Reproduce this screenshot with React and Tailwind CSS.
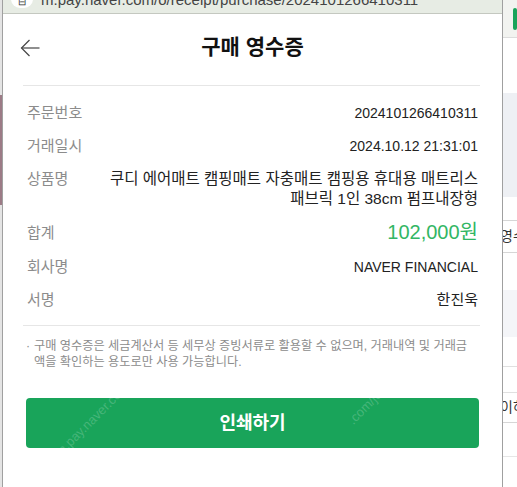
import React from "react";

const rows = [
  { label: "주문번호", value: "2024101266410311" },
  { label: "거래일시", value: "2024.10.12 21:31:01" },
];

const Row = ({ label, children, center, valueClass = "text-[14px]" }) => (
  <div className={`flex justify-between ${center ? "items-center" : "items-start"}`}>
    <span className="w-[80px] shrink-0 text-[15px] leading-[20px] text-[#8c8c8c]">{label}</span>
    <div className={`text-right leading-[20px] text-[#222] ${valueClass}`}>{children}</div>
  </div>
);

const BackPage = () => (
  <div className="flex-1 flex flex-col overflow-hidden bg-white text-[14px] text-[#333] whitespace-nowrap">
    <div className="h-[38px] bg-[#f2f3f0] border-b border-[#dcdcdc] flex items-center">
      <div className="ml-[10px] w-[8px] h-[22px] rounded-[2px] bg-[#1aa35a]"></div>
    </div>
    <div className="h-[55px]"></div>
    <div className="h-[104px] bg-[#eef0f4]"></div>
    <div className="h-[23px]"></div>
    <div className="h-[33px] border-t border-b border-[#d6d6d6] flex items-center -ml-[3px]">영수</div>
    <div className="h-[37px]"></div>
    <div className="h-[47px] bg-[#f4f5f8]"></div>
    <div className="h-[30px] border-b border-[#e0e0e0]"></div>
    <div className="h-[26px] border-b border-[#e0e0e0]"></div>
    <div className="h-[30px] border-b border-[#d6d6d6] flex items-center -ml-[3px]">이하</div>
    <div className="h-[34px] border-b border-[#e6e6e6]"></div>
    <div className="flex-1"></div>
  </div>
);

export default function App() {
  return (
    <div className="flex w-[517px] h-[487px] overflow-hidden bg-white font-['Liberation_Sans','Noto_Sans_CJK_KR',sans-serif]">
      <div className="w-[2px] flex flex-col bg-[#e4e4e4]">
        <div className="h-[95px]"></div>
        <div className="h-[110px] bg-[#9c7b86]"></div>
      </div>

      <div className="relative w-[501px] flex flex-col border-l border-r border-[#a0a0a0] bg-white">
        {/* popup address bar, mostly scrolled out of view */}
        <div className="h-[14px] flex items-start bg-[#e7ece4] border-b border-[#c4c8c0] overflow-hidden">
          <div className="ml-[8px] -mt-[10px] w-[22px] h-[18px] rounded-full bg-white flex items-end justify-center">
            <span className="text-[10px] leading-[12px] text-[#333]">⊟</span>
          </div>
          <span className="ml-[8px] -mt-[9px] text-[15px] leading-[18px] text-[#444] whitespace-nowrap">
            m.pay.naver.com/o/receipt/purchase/2024101266410311
          </span>
        </div>

        <div className="relative h-[71px] pb-[5px] flex items-center justify-center">
          <button className="absolute left-[17px] top-[25px] p-0">
            <svg width="20" height="18" viewBox="0 0 20 18" fill="none" stroke="#444" strokeWidth="1.2">
              <path d="M19.5 9H1.5" />
              <path d="M9.5 1L1.5 9l8 8" />
            </svg>
          </button>
          <h1 className="text-[21px] font-bold text-[#111]">구매 영수증</h1>
        </div>

        <div className="ml-[20px] mr-[22px] border-t border-[#e6e6e6]"></div>

        <div className="px-[24px] pt-[17px] pb-[15px] flex flex-col gap-[13px]">
          {rows.map((r) => (
            <Row key={r.label} label={r.label}>
              {r.value}
            </Row>
          ))}
          <Row label="상품명" valueClass="text-[15.5px] whitespace-nowrap">
            쿠디 에어매트 캠핑매트 자충매트 캠핑용 휴대용 매트리스
            <br />
            패브릭 1인 38cm 펌프내장형
          </Row>
          <Row label="합계" center>
            <span className="text-[20px] leading-[20px] text-[#32b664]">102,000원</span>
          </Row>
          <Row label="회사명">NAVER FINANCIAL</Row>
          <Row label="서명" valueClass="text-[15px]">한진욱</Row>
        </div>

        <div className="ml-[20px] mr-[22px] border-t border-[#e6e6e6]"></div>

        <div className="px-[23px] pt-[12px] flex text-[12.2px] leading-[16px] text-[#8c8c8c]">
          <span className="w-[8px] shrink-0">·</span>
          <p className="whitespace-nowrap">
            구매 영수증은 세금계산서 등 세무상 증빙서류로 활용할 수 없으며, 거래내역 및 거래금
            <br />
            액을 확인하는 용도로만 사용 가능합니다.
          </p>
        </div>

        <button className="mx-[23px] mt-[28px] h-[50px] rounded-[4px] bg-[#19a45a] text-white text-[18px] font-bold">
          인쇄하기
        </button>

        <span className="absolute left-[40px] top-[410px] -rotate-45 text-[13px] text-white/20 whitespace-nowrap pointer-events-none">
          m.pay.naver.com
        </span>
        <span className="absolute left-[340px] top-[395px] -rotate-45 text-[13px] text-white/20 whitespace-nowrap pointer-events-none">
          .com/joo
        </span>
      </div>

      <BackPage />
    </div>
  );
}
